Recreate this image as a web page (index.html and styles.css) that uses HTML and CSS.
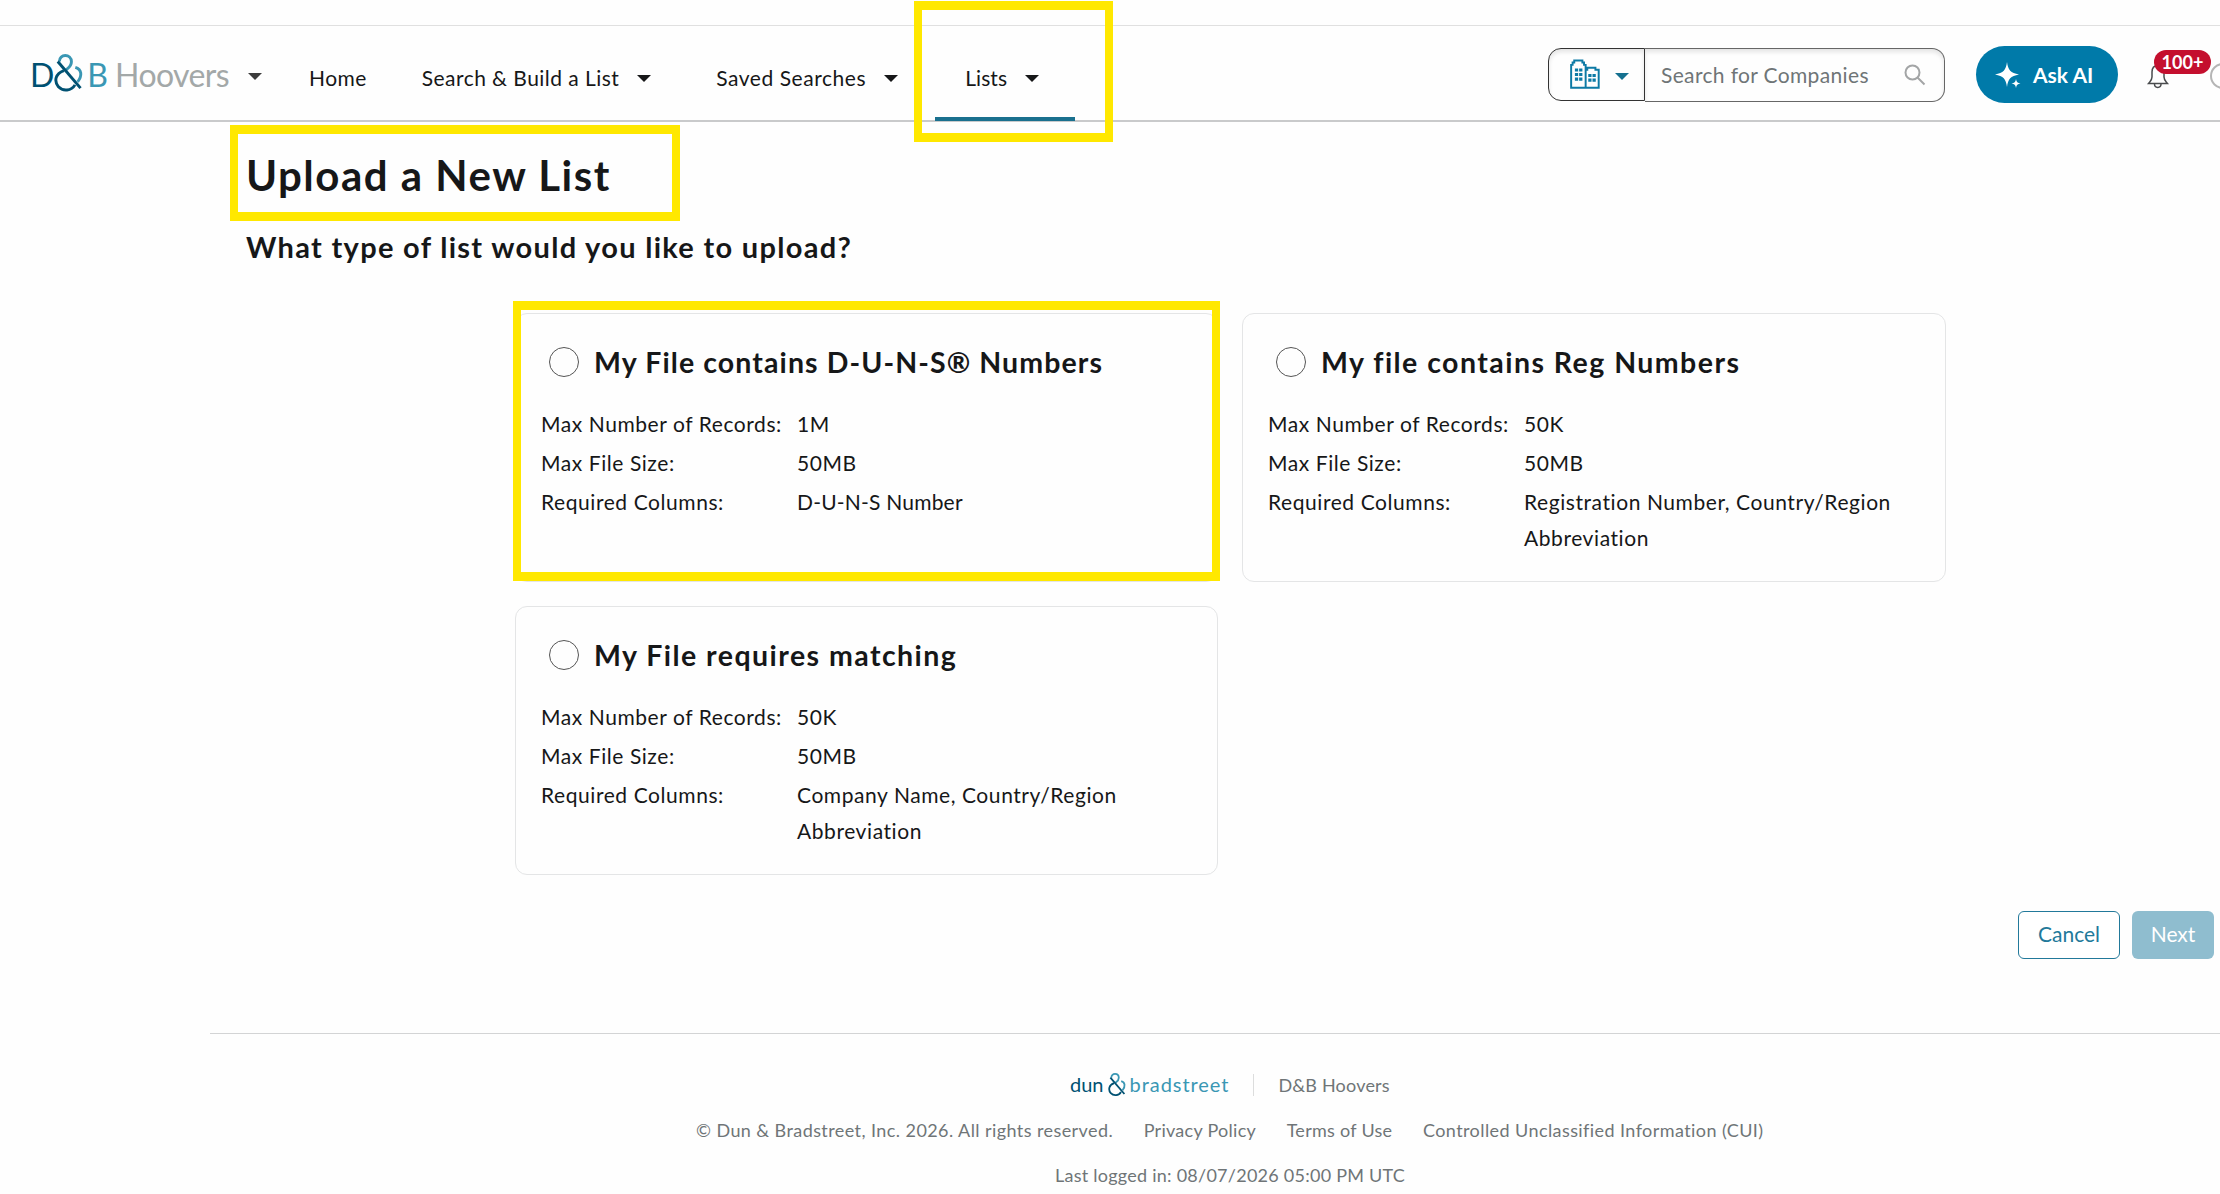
FILE: index.html
```html
<!DOCTYPE html>
<html lang="en">
<head>
  <meta charset="UTF-8" />
  <meta name="viewport" content="width=device-width, initial-scale=1.0"/>
  <title>D&amp;B Hoovers - Upload a New List</title>
  <link rel="stylesheet" href="styles.css">
</head>
<body>
  <div class="top-strip"></div>

  <header class="header">
    <div class="brand">
      <span class="brand-d">D</span>
      <svg class="brand-amp" viewBox="106 38 86 120">
        <path class="amp-light" d="M121 61 C120 37 158 36 158 62 C158 76 150 80 141 87" />
        <path class="amp-light" d="M170 79 C190 85 192 105 177 124" />
        <path class="amp-dark" d="M135 89 C108 98 104 122 118 139 C132 154 158 152 169 133" />
        <path class="amp-dark" d="M116 61 L186 143" />
      </svg>
      <span class="brand-b">B</span>
      <span class="brand-name">Hoovers</span>
      <span class="caret caret-grey"></span>
    </div>

    <nav class="nav">
      <a class="nav-item"><span>Home</span></a>
      <a class="nav-item nav-search"><span>Search &amp; Build a List</span><i class="caret"></i></a>
      <a class="nav-item nav-saved"><span>Saved Searches</span><i class="caret"></i></a>
      <a class="nav-item nav-lists"><span>Lists</span><i class="caret"></i></a>
    </nav>

    <div class="tools">
      <div class="search">
        <div class="search-type">
          <svg class="icon-building" viewBox="90 60 92 90">
            <path d="M93.500 147 V77 H98 V70 H103 V63.500 H128 V70 H133 V77 H138 V147 Z M138 147 V92 H143 V86 H168 V92 H178 V147 Z" />
            <path class="windows" d="M110 88v38M123 88v38M151 105v24M164 105v24" />
          </svg>
          <span class="caret caret-blue"></span>
        </div>
        <div class="search-field">
          <span class="search-text">Search for Companies</span>
          <svg class="icon-search" viewBox="0 0 22 22">
            <circle cx="8.500" cy="8.500" r="7" />
            <path d="M13.500 13.500 L20.500 20.500" />
          </svg>
        </div>
      </div>
      <button class="ask">
        <svg class="icon-spark" viewBox="0 0 26 26">
          <path d="M12 0 C13 8 15.500 11 24 12.500 C15.500 14 13 17 12 25 C11 17 8.500 14 0 12.500 C8.500 11 11 8 12 0 Z" />
          <path d="M21 17 C21.500 20 22.500 21 25.500 21.500 C22.500 22 21.500 23 21 26 C20.500 23 19.500 22 16.500 21.500 C19.500 21 20.500 20 21 17 Z" />
        </svg>
        <span>Ask AI</span>
      </button>
      <div class="bell">
        <svg class="icon-bell" viewBox="0 0 22 26">
          <path d="M5 9 C5 5 7 2.500 11 2.500 C15 2.500 17 5 17 9 V14 C17 17 18.500 18 20.500 20.500 H1.500 C3.500 18 5 17 5 14 Z" />
          <path d="M7.500 21 C7.500 25.500 14 25.500 14 21" />
        </svg>
        <span class="badge">100+</span>
      </div>
      <span class="help"></span>
    </div>
  </header>

  <main class="main">
    <h1>Upload a New List</h1>
    <h2>What type of list would you like to upload?</h2>

    <div class="cards">
      <section class="card">
        <label class="card-title title-duns"><i class="radio"></i><span>My File contains D-U-N-S® Numbers</span></label>
        <dl>
          <dt>Max Number of Records:</dt><dd>1M</dd>
          <dt>Max File Size:</dt><dd>50MB</dd>
          <dt>Required Columns:</dt><dd class="duns">D-U-N-S Number</dd>
        </dl>
      </section>
      <section class="card">
        <label class="card-title"><i class="radio"></i><span>My file contains Reg Numbers</span></label>
        <dl>
          <dt>Max Number of Records:</dt><dd>50K</dd>
          <dt>Max File Size:</dt><dd>50MB</dd>
          <dt>Required Columns:</dt><dd>Registration Number, Country/Region<br>Abbreviation</dd>
        </dl>
      </section>
      <section class="card">
        <label class="card-title"><i class="radio"></i><span>My File requires matching</span></label>
        <dl>
          <dt>Max Number of Records:</dt><dd>50K</dd>
          <dt>Max File Size:</dt><dd>50MB</dd>
          <dt>Required Columns:</dt><dd>Company Name, Country/Region<br>Abbreviation</dd>
        </dl>
      </section>
    </div>

    <div class="actions">
      <button class="btn btn-cancel">Cancel</button>
      <button class="btn">Next</button>
    </div>
  </main>

  <footer class="footer">
    <div class="footer-brand">
      <span class="dun">dun</span>
      <svg class="footer-amp" viewBox="106 38 86 120">
        <path class="amp-light" d="M121 61 C120 37 158 36 158 62 C158 76 150 80 141 87" />
        <path class="amp-light" d="M170 79 C190 85 192 105 177 124" />
        <path class="amp-dark" d="M135 89 C108 98 104 122 118 139 C132 154 158 152 169 133" />
        <path class="amp-dark" d="M116 61 L186 143" />
      </svg>
      <span class="bradstreet">bradstreet</span>
      <span class="footer-product">D&amp;B Hoovers</span>
    </div>
    <div class="footer-links">
      <span>© Dun &amp; Bradstreet, Inc. 2026. All rights reserved.</span>
      <a>Privacy Policy</a>
      <a>Terms of Use</a>
      <span>Controlled Unclassified Information (CUI)</span>
    </div>
    <p class="footer-login">Last logged in: 08/07/2026 05:00 PM UTC</p>
  </footer>

  <div class="mark mark-lists"></div>
  <div class="mark mark-title"></div>
  <div class="mark mark-card"></div>
</body>
</html>
```

FILE: styles.css
```css
* {
  box-sizing: border-box;
}
body {
  margin: 0;
  height: 1194px;
  overflow: hidden;
  position: relative;
  background: #fefefe;
  color: #161718;
  font-family: Lato, "Liberation Sans", sans-serif;
  font-size: 21px;
}
button {
  font-family: inherit;
  font-size: inherit;
}
.top-strip {
  height: 26px;
  border-bottom: 1px solid #e0e0e0;
}
.caret {
  border: 7px solid transparent;
  border-top: 7.5px solid #161718;
  border-bottom: 0;
}
.caret-grey {
  border-top-color: #3c3c3c;
}
.caret-blue {
  border-top-color: #15708f;
}

/* header */
.header {
  display: flex;
  height: 96px;
  padding-left: 30px;
  border-bottom: 2px solid #c9cacb;
}
.brand {
  display: flex;
  align-items: center;
  width: 264px;
  height: 97px;
  font-size: 32px;
}
.brand-d {
  color: #005172;
}
.brand-amp {
  width: 29px;
  height: 39px;
  margin: 0 4px 3px 0;
}
.amp-light,
.amp-dark {
  fill: none;
  stroke: #3a97b4;
  stroke-width: 9;
}
.amp-dark {
  stroke: #005172;
}
.brand-b {
  color: #3a97b4;
}
.brand-name {
  margin-left: 7px;
  color: #a3a8a8;
  letter-spacing: -0.6px;
}
.brand .caret {
  margin: 4px 0 0 19px;
}
.nav {
  display: flex;
  height: 95px;
  letter-spacing: 0.45px;
}
.nav-item {
  display: flex;
  align-items: center;
  gap: 18px;
  padding: 12px 15px 0;
  border-bottom: 4px solid transparent;
}
.nav-item .caret {
  margin-top: 1px;
}
.nav-search {
  margin-left: 25px;
}
.nav-saved {
  margin-left: 35px;
  letter-spacing: 0.55px;
}
.nav-lists {
  margin-left: 22px;
  padding: 12px 36px 0 30px;
  border-color: #1a708e;
  letter-spacing: 0.1px;
}
.tools {
  display: flex;
  align-items: center;
  position: absolute;
  left: 1548px;
  height: 97px;
}
.search {
  display: flex;
  width: 397px;
  height: 54px;
}
.search-type {
  display: flex;
  align-items: center;
  width: 97px;
  height: 53px;
  padding-left: 21px;
  gap: 15px;
  border: 1px solid #333;
  border-radius: 13px 0 0 13px;
  box-shadow: inset 0 3px 4px #e4e4e4;
}
.search-type .caret {
  margin-top: 5px;
}
.icon-building {
  width: 30px;
  height: 30px;
  fill: none;
  stroke: #0d7aa5;
  stroke-width: 6;
}
.windows {
  stroke-width: 10;
  stroke-dasharray: 9.5 4.5;
}
.search-field {
  display: flex;
  flex: 1;
  align-items: center;
  justify-content: space-between;
  padding: 0 18px 0 16px;
  border: 1px solid #666;
  border-left: 0;
  border-radius: 0 13px 13px 0;
  box-shadow: inset 0 3px 4px #e4e4e4;
  color: #6f7577;
  letter-spacing: 0.35px;
}
.icon-search {
  width: 22px;
  height: 22px;
  fill: none;
  stroke: #a3a5a6;
  stroke-width: 2;
}
.ask {
  display: flex;
  align-items: center;
  gap: 12px;
  width: 142px;
  height: 57px;
  margin-left: 31px;
  padding: 0 0 0 19px;
  border: 0;
  border-radius: 29px;
  background: #007aa9;
  color: #fff;
  font-weight: 700;
}
.icon-spark {
  width: 26px;
  height: 26px;
  fill: #fff;
}
.bell {
  position: relative;
  width: 22px;
  height: 26px;
  margin: 2px 0 0 29px;
}
.icon-bell {
  fill: none;
  stroke: #4a4c4e;
  stroke-width: 1.5;
}
.badge {
  position: absolute;
  left: 7px;
  top: -13px;
  width: 57px;
  height: 24px;
  border-radius: 12px;
  background: #c40f2e;
  color: #fff;
  font-size: 18px;
  font-weight: 700;
  line-height: 24px;
  text-align: center;
}
.help {
  width: 26px;
  height: 26px;
  margin: 3px 0 0 41px;
  border: 2px solid #b5b5b5;
  border-radius: 50%;
}

/* content */
.main {
  height: 911px;
}
h1 {
  margin: 0 0 0 246px;
  padding-top: 27px;
  font-size: 42px;
  line-height: 52px;
  letter-spacing: 1.5px;
}
h2 {
  margin: 27px 0 0 246px;
  font-size: 29px;
  line-height: 38px;
  letter-spacing: 1.3px;
}
.cards {
  display: grid;
  grid-template-columns: 703px 704px;
  gap: 24px;
  margin: 47px 0 0 515px;
}
.card {
  height: 269px;
  padding: 33px 25px 0;
  border: 1px solid #e4e5e6;
  border-radius: 12px;
}
.card-title {
  display: flex;
  align-items: center;
  gap: 15px;
  height: 30px;
  padding-left: 8px;
  font-size: 28.5px;
  font-weight: 700;
  letter-spacing: 1.45px;
}
.title-duns {
  letter-spacing: 1.1px;
}
.radio {
  width: 30px;
  height: 30px;
  border: 1px solid #555;
  border-radius: 50%;
}
dl {
  display: grid;
  grid-template-columns: 256px 1fr;
  row-gap: 3px;
  margin: 29px 0 0;
  line-height: 36px;
  letter-spacing: 0.57px;
}
dd {
  margin: 0;
  white-space: nowrap;
}
.duns {
  letter-spacing: 0.2px;
}
.actions {
  display: flex;
  justify-content: flex-end;
  gap: 12px;
  margin: 36px 6px 0 0;
}
.btn {
  width: 82px;
  height: 48px;
  padding: 0 0 3px;
  border: 0;
  border-radius: 6px;
  background: #8fbdcf;
  color: #fff;
  font-size: 21px;
}
.btn-cancel {
  width: 102px;
  border: 1px solid #22799a;
  background: #fff;
  color: #22799a;
}

/* footer */
.footer {
  margin-left: 210px;
  padding-left: 30px;
  border-top: 1px solid #d3d4d5;
  color: #6f7577;
  font-size: 18px;
}
.footer-brand {
  display: flex;
  align-items: center;
  height: 24px;
  margin: 39px 0 0 830px;
}
.dun,
.bradstreet {
  padding-bottom: 3px;
  font-size: 20px;
}
.dun {
  color: #005172;
}
.footer-amp {
  width: 18px;
  height: 24px;
  margin: 0 4px;
}
.bradstreet {
  color: #3a97b4;
  letter-spacing: 0.95px;
}
.footer-product {
  margin-left: 24px;
  padding-left: 24px;
  border-left: 1px solid #dcdddd;
  letter-spacing: 0.2px;
}
.footer-links {
  display: flex;
  gap: 30.5px;
  margin: 22px 0 0 456px;
  letter-spacing: 0.42px;
}
.footer-links a {
  letter-spacing: 0.28px;
}
.footer-login {
  margin: 23px 0 0 815px;
  letter-spacing: 0.25px;
}

/* highlight boxes */
.mark {
  position: absolute;
  border: 9px solid #ffe800;
  border-width: 9px 8px;
}
.mark-lists {
  left: 914px;
  top: 1px;
  width: 199px;
  height: 141px;
}
.mark-title {
  left: 230px;
  top: 125px;
  width: 450px;
  height: 96px;
}
.mark-card {
  left: 513px;
  top: 301px;
  width: 707px;
  height: 280px;
}
```
